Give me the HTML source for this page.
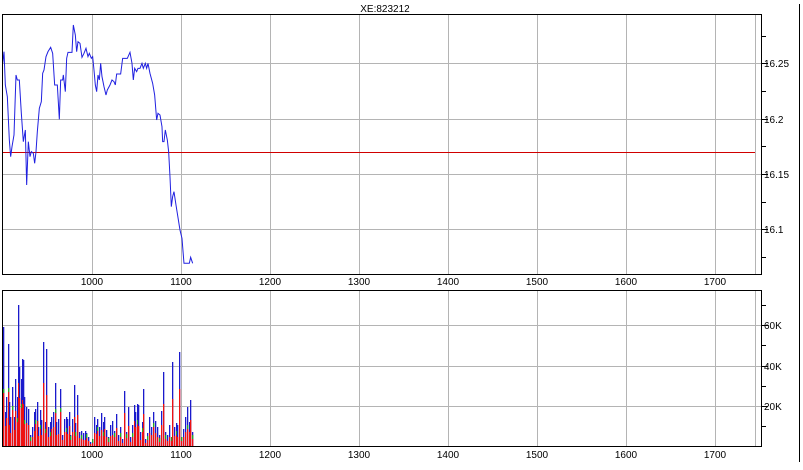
<!DOCTYPE html>
<html><head><meta charset="utf-8"><style>
body{margin:0;background:#fff;width:803px;height:465px;overflow:hidden}
svg text{font-family:"Liberation Sans",sans-serif;font-size:10px;fill:#000}
</style></head><body>
<svg width="803" height="465" xmlns="http://www.w3.org/2000/svg">
<rect width="803" height="465" fill="#fff"/>
<text x="385" y="12" text-anchor="middle">XE:823212</text>
<line x1="799.5" y1="4" x2="799.5" y2="462" stroke="#000"/>
<!-- top chart grid -->
<g stroke="#b4b4b4" stroke-width="1">
<line x1="92.5" y1="14" x2="92.5" y2="275"/><line x1="181.5" y1="14" x2="181.5" y2="275"/>
<line x1="270.5" y1="14" x2="270.5" y2="275"/><line x1="359.5" y1="14" x2="359.5" y2="275"/>
<line x1="448.5" y1="14" x2="448.5" y2="275"/><line x1="537.5" y1="14" x2="537.5" y2="275"/>
<line x1="626.5" y1="14" x2="626.5" y2="275"/><line x1="715.5" y1="14" x2="715.5" y2="275"/>
<line x1="755.5" y1="14" x2="755.5" y2="275"/>
<line x1="2" y1="63.5" x2="762" y2="63.5"/><line x1="2" y1="119.5" x2="762" y2="119.5"/>
<line x1="2" y1="174.5" x2="762" y2="174.5"/><line x1="2" y1="229.5" x2="762" y2="229.5"/>
</g>
<line x1="2" y1="152.5" x2="755" y2="152.5" stroke="#d00000"/>
<polyline fill="none" stroke="#2020e0" stroke-width="3" transform="scale(0.3333)" points="8,190 12,155 16,255 22,290 28,420 32,470 36,440 42,405 48,225 52,240 58,240 64,340 70,425 76,390 80,555 85,425 90,470 94,455 100,460 104,490 108,455 112,395 118,325 124,305 128,220 132,210 138,170 144,155 152,142 158,160 164,255 172,255 178,358 182,240 188,240 190,225 196,275 200,175 204,157 216,157 220,75 226,105 230,155 234,125 240,130 246,172 252,160 258,145 264,170 268,160 274,175 278,170 282,210 286,255 290,275 294,225 298,240 302,190 306,230 312,260 318,285 322,270 330,255 336,240 342,245 346,255 350,222 362,222 368,175 382,175 390,157 396,190 400,240 404,205 410,215 414,205 420,205 426,190 430,205 436,190 440,205 444,190 450,220 458,250 464,285 470,360 474,340 480,345 486,380 488,425 492,425 496,390 502,420 506,455 510,530 514,620 518,590 522,575 528,615 532,640 540,690 546,715 552,790 568,790 572,772 578,790"/>
<rect x="2.5" y="14.5" width="759" height="260" fill="none" stroke="#000"/>
<g stroke="#000">
<line x1="762" y1="36.5" x2="766" y2="36.5"/><line x1="762" y1="63.5" x2="768" y2="63.5"/>
<line x1="762" y1="91.5" x2="766" y2="91.5"/><line x1="762" y1="119.5" x2="768" y2="119.5"/>
<line x1="762" y1="146.5" x2="766" y2="146.5"/><line x1="762" y1="174.5" x2="768" y2="174.5"/>
<line x1="762" y1="202.5" x2="766" y2="202.5"/><line x1="762" y1="229.5" x2="768" y2="229.5"/>
<line x1="762" y1="257.5" x2="766" y2="257.5"/>
</g>
<text x="764" y="67">16.25</text><text x="764" y="123">16.2</text><text x="764" y="178">16.15</text><text x="764" y="233">16.1</text>
<g text-anchor="middle">
<text x="92" y="285">1000</text><text x="181" y="285">1100</text><text x="270" y="285">1200</text><text x="359" y="285">1300</text><text x="448" y="285">1400</text><text x="537" y="285">1500</text><text x="626" y="285">1600</text><text x="715" y="285">1700</text>
<text x="92" y="458">1000</text><text x="181" y="458">1100</text><text x="270" y="458">1200</text><text x="359" y="458">1300</text><text x="448" y="458">1400</text><text x="537" y="458">1500</text><text x="626" y="458">1600</text><text x="715" y="458">1700</text>
</g>
<!-- bottom chart -->
<g stroke="#b4b4b4">
<line x1="92.5" y1="290" x2="92.5" y2="447"/><line x1="181.5" y1="290" x2="181.5" y2="447"/>
<line x1="270.5" y1="290" x2="270.5" y2="447"/><line x1="359.5" y1="290" x2="359.5" y2="447"/>
<line x1="448.5" y1="290" x2="448.5" y2="447"/><line x1="537.5" y1="290" x2="537.5" y2="447"/>
<line x1="626.5" y1="290" x2="626.5" y2="447"/><line x1="715.5" y1="290" x2="715.5" y2="447"/>
<line x1="755.5" y1="290" x2="755.5" y2="447"/>
<line x1="2" y1="325.5" x2="762" y2="325.5"/><line x1="2" y1="366.5" x2="762" y2="366.5"/><line x1="2" y1="406.5" x2="762" y2="406.5"/>
</g>
<g id="bars"></g>
<rect x="2.5" y="290.5" width="759" height="156" fill="none" stroke="#000"/>
<g stroke="#000">
<line x1="762" y1="305.5" x2="766" y2="305.5"/><line x1="762" y1="325.5" x2="768" y2="325.5"/>
<line x1="762" y1="345.5" x2="766" y2="345.5"/><line x1="762" y1="366.5" x2="768" y2="366.5"/>
<line x1="762" y1="386.5" x2="766" y2="386.5"/><line x1="762" y1="406.5" x2="768" y2="406.5"/>
<line x1="762" y1="426.5" x2="766" y2="426.5"/>
</g>
<text x="764" y="329">60K</text><text x="764" y="370">40K</text><text x="764" y="410">20K</text>
</svg>
<script>
var d=[3,120,5,35,6,50,8,103,9,45,10,30,12,60,14,30,15,68,17,50,18,142,19,80,21,68,22,88,23,87,24,50,26,40,28,38,30,12,32,20,34,35,35,38,37,45,38,20,40,37,41,27,43,105,45,25,46,98,48,20,50,25,51,30,53,35,55,64,56,25,58,28,60,58,62,12,64,28,66,30,67,28,69,35,70,12,72,28,74,62,75,24,77,52,79,15,81,16,83,14,85,16,86,14,88,10,90,5,92,8,94,30,96,22,97,28,99,20,101,34,103,25,104,30,106,17,108,10,110,22,112,26,114,16,116,33,118,12,120,20,122,8,124,56,126,15,128,40,130,10,132,22,134,42,135,35,137,43,138,42,140,15,142,25,143,58,145,8,147,14,149,30,151,20,153,35,155,26,157,20,159,12,161,36,163,75,165,15,167,12,169,22,171,10,172,85,174,20,176,24,177,22,179,95,181,10,183,18,185,30,187,40,189,25,190,47,192,15];
var s='';for(var i=0;i<d.length;i+=2){var x=d[i],h=d[i+1],r=Math.round(h*(0.45+0.2*((i*7)%5)/5));
s+='<rect x="'+x+'" y="'+(447-h)+'" width="1.3" height="'+h+'" fill="#1a1acc"/>';
s+='<rect x="'+x+'" y="'+(447-r)+'" width="1.3" height="'+r+'" fill="#ee1111"/>';
if(i%6==0)s+='<rect x="'+x+'" y="'+(447-r-4)+'" width="1.3" height="4" fill="#22aa22"/>';}
document.getElementById('bars').innerHTML=s;
</script>
</body></html>
